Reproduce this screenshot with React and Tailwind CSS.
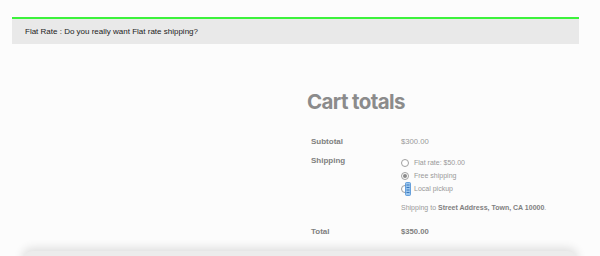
import React from "react";

function Radio({ checked }) {
  return (
    <span className="relative flex h-[8px] w-[8px] shrink-0 items-center justify-center rounded-full border border-[#a0a0a0] bg-white">
      {checked && <span className="h-[4px] w-[4px] rounded-full bg-[#8a8a8a]" />}
    </span>
  );
}

export default function App() {
  return (
    <div
      className="h-[256px] w-[600px] overflow-hidden bg-[#fcfcfc] text-[#8a8a8a]"
      style={{ fontFamily: '"Liberation Sans", Arial, sans-serif' }}
    >
      <div className="pt-[17px]">
        <div className="ml-[12px] flex h-[27px] w-[567px] items-center border-t-2 border-[#3cf23c] bg-[#e9e9e9] pl-[13px] text-[8px] text-[#222]">
          Flat Rate : Do you really want Flat rate shipping?
        </div>
      </div>

      <div className="ml-[307px] mt-[48px]">
        <h2
          className="text-[20.5px] font-bold leading-none tracking-[-0.03em] text-[#8b8b8b]"
          style={{ fontFamily: 'Inter, "Liberation Sans", sans-serif' }}
        >
          Cart totals
        </h2>

        <div className="mt-[25px] text-[8px] leading-none">
          <div className="flex">
            <div className="w-[94px] pl-[4px] font-bold text-[#808080]">Subtotal</div>
            <div className="text-[7.7px] text-[#999]">$300.00</div>
          </div>

          <div className="mt-[10px] flex">
            <div className="w-[94px] pl-[4px] pt-[1px] font-bold text-[#808080]">Shipping</div>
            <div className="flex flex-col">
              <div className="mt-[3px] flex flex-col gap-[5px] text-[7px] text-[#999]">
                <div className="flex items-center gap-[5px]">
                  <Radio />
                  <span>Flat rate: $50.00</span>
                </div>
                <div className="flex items-center gap-[5px]">
                  <Radio checked />
                  <span>Free shipping</span>
                </div>
                <div className="relative flex items-center gap-[5px]">
                  <Radio />
                  <span>Local pickup</span>
                  <svg
                    className="absolute left-[4px] top-[-3px]"
                    width="6"
                    height="14"
                    viewBox="0 0 6 14"
                  >
                    <rect x="0.5" y="0.5" width="5" height="13" rx="1" fill="#9cc7ee" stroke="#4d8fd6" strokeWidth="0.8" />
                    <path d="M1.5 3h3M1.5 5.5h3M1.5 8h3M1.5 10.5h3" stroke="#2f6fb8" strokeWidth="0.9" />
                  </svg>
                </div>
              </div>
              <div className="mt-[11px] text-[7px] text-[#999]">
                Shipping to <span className="font-bold text-[#808080]">Street Address, Town, CA 10000</span>.
              </div>
            </div>
          </div>

          <div className="mt-[17px] flex">
            <div className="w-[94px] pl-[4px] font-bold text-[#808080]">Total</div>
            <div className="text-[7.7px] font-bold text-[#808080]">$350.00</div>
          </div>
        </div>
      </div>

      <div className="mx-[22px] mt-[15px] h-[20px] rounded-[10px] bg-[#ececec] shadow-[0_-3px_10px_rgba(0,0,0,0.12)]" />
    </div>
  );
}
